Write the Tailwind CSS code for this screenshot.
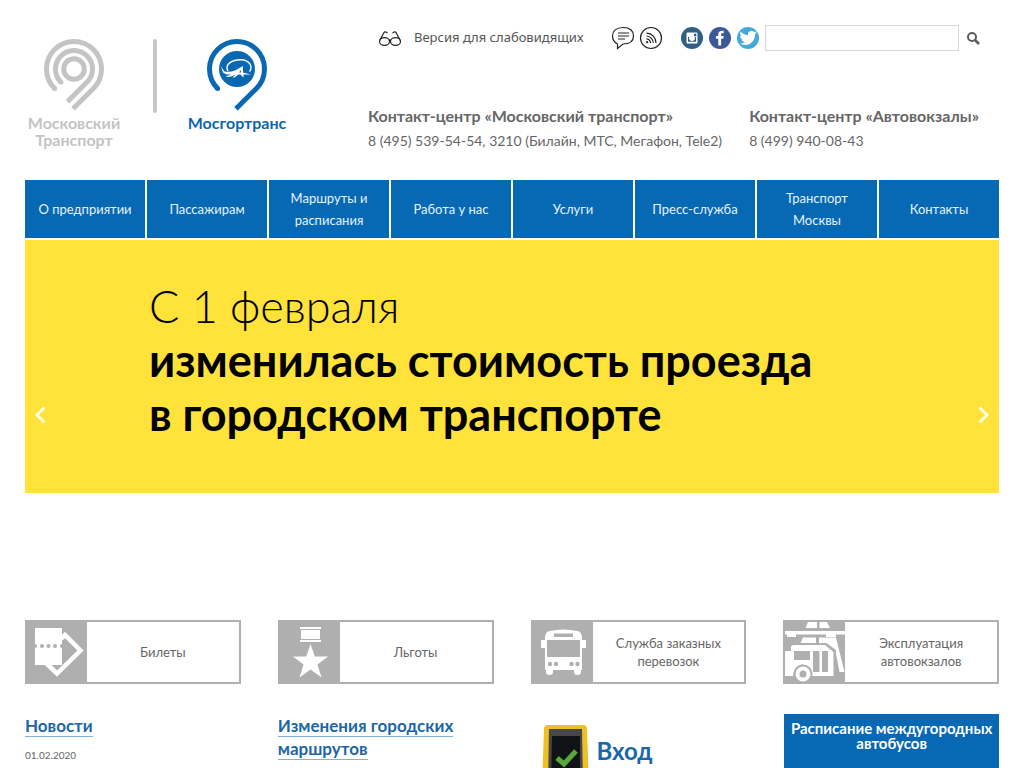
<!DOCTYPE html>
<html lang="ru">
<head>
<meta charset="utf-8">
<meta name="viewport" content="width=device-width, initial-scale=1">
<title>Мосгортранс</title>
<script src="https://cdn.jsdelivr.net/npm/@tailwindcss/browser@4"></script>
</head>
<body class="bg-white font-['Lato','Noto_Sans',sans-serif] text-[#666]">
<div class="px-[25px]">
  <header class="flex h-[180px]">
    <div class="flex w-[343px] shrink-0 pt-[38px]">
      <a href="#" class="flex w-[98px] flex-col items-center text-center text-base leading-[17px] font-bold text-[#c4c4c4]">
        <svg class="h-[76px] w-[62px]" viewBox="43 38 62 76" fill="none" stroke="#c4c4c4" stroke-width="5" aria-hidden="true">
          <circle cx="74" cy="69" r="10.3"/>
          <path d="M60.9 82.1A18.5 18.5 0 1 1 87.1 82.1L67.5 101.7"/>
          <path d="M54.6 88.4A27.5 27.5 0 1 1 93.4 88.4L73 108.8"/>
          <circle cx="60.9" cy="82" r="2.5" fill="#c4c4c4" stroke="none"/>
          <circle cx="54.6" cy="88.4" r="2.5" fill="#c4c4c4" stroke="none"/>
        </svg>
        <span>Московский Транспорт</span>
      </a>
      <div class="mt-px ml-[30px] h-[74px] w-1 rounded-full bg-[#c8c8c8]"></div>
      <a href="#" class="ml-[30px] flex w-[100px] flex-col items-center text-center text-base leading-[17px] font-bold text-[#0a67b2]">
        <svg class="h-[76px] w-[62px]" viewBox="43 38 62 76" fill="none" stroke="#0a67b2" stroke-width="5" aria-hidden="true">
          <path d="M54.6 88.4A27.5 27.5 0 1 1 93.4 88.4L73 108.8"/>
          <circle cx="54.6" cy="88.4" r="2.5" fill="#0a67b2" stroke="none"/>
          <circle cx="74" cy="69" r="18" fill="#0a67b2" stroke="none"/>
          <path d="M65 71C61 64 70 59.500 78 59.700C86 60 90.500 66 86.500 71.500" stroke="#fff" stroke-width="1.400"/>
          <path d="M58 66.500L61.500 71.500Q67 72.500 72 70.500L80 66V72.500L88 74.500L80.500 74.500V77.500L77.500 74.500H75.500L71.500 77.500H69.500L72.500 74.500Q67 78 62.500 76.500L68.500 74.500L63.500 74.500L60 72.500ZM76 72.500H78V70Z" fill="#fff" fill-rule="evenodd" stroke="none"/>
        </svg>
        <span>Мосгортранс</span>
      </a>
    </div>
    <div class="min-w-0 flex-1">
      <div class="flex items-center pt-[25px] pl-[10px]">
        <a href="#" class="flex items-center gap-3 font-['Noto_Sans',sans-serif] text-[13px] text-[#555]">
          <svg class="h-[18px] w-6" viewBox="0 0 24 18" fill="none" stroke="#222" stroke-width="1.200" aria-hidden="true">
            <ellipse cx="6.500" cy="12.500" rx="5" ry="3.800"/><ellipse cx="17.500" cy="12.500" rx="5" ry="3.800"/>
            <path d="M11 11.500Q12 10.500 13 11.500M1.700 11.500L6 3.500Q7 2 9.500 4M22.300 11.500L18 3.500Q17 2 14.500 4"/>
          </svg>
          <span class="w-[175px] whitespace-nowrap">Версия для слабовидящих</span>
        </a>
        <a href="#" aria-label="Обратная связь" class="ml-[22px]">
          <svg class="size-6" viewBox="0 0 24 24" fill="none" stroke="#222" stroke-width="1.200">
            <path d="M6.500 18C3.500 16.500 1.500 13.500 1.500 10C1.500 5 5 1.500 12 1.500S22.500 5 22.500 10S19 18 12 18L6.500 22.500Z"/>
            <path d="M7 7H18M7 10H18M7 13H14"/>
          </svg>
        </a>
        <a href="#" aria-label="RSS" class="ml-1">
          <svg class="size-6" viewBox="0 0 24 24" fill="none" stroke="#222" stroke-width="1.200">
            <circle cx="12" cy="12" r="10.500"/><circle cx="8.200" cy="16.200" r="1.100" fill="#222" stroke="none"/>
            <path d="M7.500 12.800A4 4 0 0 1 11.500 17M7.500 10A7 7 0 0 1 14.200 17M7.500 7.200A9.500 9.500 0 0 1 17 17"/>
          </svg>
        </a>
        <a href="#" aria-label="Instagram" class="ml-[18px]">
          <svg class="size-[22px]" viewBox="0 0 22 22">
            <circle cx="11" cy="11" r="11" fill="#305f85"/>
            <path fill="#fff" fill-rule="evenodd" d="M6.500 5.500h9a1 1 0 0 1 1 1v9a1 1 0 0 1-1 1h-9a1 1 0 0 1-1-1v-9a1 1 0 0 1 1-1ZM13 6.800v2.400h2.300V6.800ZM7 10v4.800h8V10h-1.200a3 3 0 1 1-5.600 0Z"/>
            <circle cx="11" cy="11" r="1.800" fill="#fff"/>
          </svg>
        </a>
        <a href="#" aria-label="Facebook" class="ml-1.5">
          <svg class="size-[22px]" viewBox="0 0 22 22">
            <circle cx="11" cy="11" r="11" fill="#3b5998"/>
            <path fill="#fff" d="M9.300 18.500V11.700H7V9h2.300V7.200C9.300 4.900 10.700 3.700 12.700 3.700h2V6.300h-1.300c-1 0-1.300.5-1.300 1.300V9h2.600l-.4 2.700h-2.200v6.800Z"/>
          </svg>
        </a>
        <a href="#" aria-label="Twitter" class="ml-1.5">
          <svg class="size-[22px]" viewBox="0 0 22 22">
            <circle cx="11" cy="11" r="11" fill="#45a8dd"/>
            <path fill="#fff" transform="translate(2.500 2.300) scale(.72)" d="M23.950 4.570a10 10 0 0 1-2.820.77 4.960 4.960 0 0 0 2.160-2.720c-.95.550-2 .950-3.130 1.180a4.920 4.920 0 0 0-8.380 4.480C7.690 8.100 4.070 6.130 1.640 3.160a4.920 4.920 0 0 0 1.520 6.570 4.900 4.900 0 0 1-2.230-.61v.06a4.920 4.920 0 0 0 3.950 4.830 5 5 0 0 1-2.210.08 4.940 4.940 0 0 0 4.600 3.420A9.870 9.870 0 0 1 0 19.540a14 14 0 0 0 7.550 2.210c9.050 0 14-7.500 14-13.980 0-.21 0-.42-.02-.63a9.940 9.940 0 0 0 2.460-2.550Z"/>
          </svg>
        </a>
        <form role="search" class="ml-1.5 flex min-w-0 flex-1 items-center pr-[18px]" onsubmit="return false">
          <input type="search" aria-label="Поиск" class="h-[26px] min-w-0 flex-1 border border-[#d5d8da] bg-white px-2 text-sm">
          <button type="submit" aria-label="Найти" class="ml-[7px]">
            <svg class="size-[15px]" viewBox="0 0 15 15" fill="none" stroke="#5c5c5c"><circle cx="6" cy="6" r="4" stroke-width="2"/><path d="M9 9L13 13" stroke-width="2.600"/></svg>
          </button>
        </form>
      </div>
      <div class="flex justify-between pt-[53px] pr-5 whitespace-nowrap">
        <section>
          <h2 class="text-base leading-6 font-bold">Контакт-центр «Московский транспорт»</h2>
          <p class="text-sm leading-[26px]">8 (495) 539-54-54, 3210 (Билайн, МТС, Мегафон, Tele2)</p>
        </section>
        <section>
          <h2 class="text-base leading-6 font-bold">Контакт-центр «Автовокзалы»</h2>
          <p class="text-sm leading-[26px]">8 (499) 940-08-43</p>
        </section>
      </div>
    </div>
  </header>

  <nav class="grid h-[58px] grid-cols-8 gap-0.5 text-center text-[13px] leading-[22px] text-[#e4f3ff]">
    <a href="#" class="flex items-center justify-center bg-[#0769b3] px-3">О предприятии</a>
    <a href="#" class="flex items-center justify-center bg-[#0769b3] px-3">Пассажирам</a>
    <a href="#" class="flex items-center justify-center bg-[#0769b3] px-3">Маршруты и расписания</a>
    <a href="#" class="flex items-center justify-center bg-[#0769b3] px-3">Работа у нас</a>
    <a href="#" class="flex items-center justify-center bg-[#0769b3] px-3">Услуги</a>
    <a href="#" class="flex items-center justify-center bg-[#0769b3] px-3">Пресс-служба</a>
    <a href="#" class="flex items-center justify-center bg-[#0769b3] px-6">Транспорт Москвы</a>
    <a href="#" class="flex items-center justify-center bg-[#0769b3] px-3">Контакты</a>
  </nav>

  <section class="relative mt-0.5 h-[253px] bg-[#ffe23a] pt-[39px] pl-[124px] text-[45px] leading-[54px] text-black">
    <p class="font-light">С 1 февраля</p>
    <p class="font-bold">изменилась стоимость проезда<br>в городском транспорте</p>
    <button type="button" aria-label="Назад" class="absolute top-[165px] left-2"><svg class="h-5 w-3.5" viewBox="0 0 14 20" fill="none" stroke="#fffde0" stroke-width="3"><path d="M11.500 2.500L4 10L11.500 17.500"/></svg></button>
    <button type="button" aria-label="Вперёд" class="absolute top-[165px] right-2"><svg class="h-5 w-3.5" viewBox="0 0 14 20" fill="none" stroke="#fffde0" stroke-width="3"><path d="M2.500 2.500L10 10L2.500 17.500"/></svg></button>
  </section>

  <div class="mt-[127px] grid grid-cols-4 gap-[37px] text-center text-[13px] leading-[18px]">
    <a href="#" class="flex h-16 border-2 border-[#afafaf]">
      <svg class="size-[60px] shrink-0 bg-[#afafaf]" viewBox="0 0 60 60" aria-hidden="true">
        <path d="M34 17L38 13L53.500 28.500L30 51.500L19 41" fill="none" stroke="#fff" stroke-width="4.500"/>
        <path d="M8 6H35V43H8Z" fill="#fff"/>
        <g fill="#afafaf"><path d="M8 22a2 2 0 0 1 0 4ZM35 22a2 2 0 0 0 0 4Z"/><circle cx="15" cy="24" r="2"/><circle cx="21.500" cy="24" r="2"/><circle cx="28" cy="24" r="2"/></g>
      </svg>
      <span class="flex flex-1 items-center justify-center">Билеты</span>
    </a>
    <a href="#" class="flex h-16 border-2 border-[#afafaf]">
      <svg class="size-[60px] shrink-0 bg-[#afafaf]" viewBox="0 0 60 60" fill="#fff" aria-hidden="true">
        <path d="M20 5H41V7H20ZM21 8H40V17H21ZM20 18H41V20H20Z"/>
        <path d="M30.500 22L34.800 34.500H48L37.500 42.500L41.500 55.500L30.500 47.500L19.500 55.500L23.500 42.500L13 34.500H26.200Z"/>
      </svg>
      <span class="flex flex-1 items-center justify-center">Льготы</span>
    </a>
    <a href="#" class="flex h-16 border-2 border-[#afafaf]">
      <svg class="size-[60px] shrink-0 bg-[#afafaf]" viewBox="0 0 60 60" fill="#fff" aria-hidden="true">
        <path fill-rule="evenodd" d="M12 17Q12 9 17 9Q30 6 44 9Q49 9 49 17V18H53V26H49V48H48V50Q48 53 44.500 53T41 50V48H20V50Q20 53 16.500 53T13 50V48H12V26H8V18H12ZM21 11.500V15H40V11.500ZM14 18V35H47V18Z"/>
        <g fill="#afafaf"><circle cx="17" cy="42" r="2.200"/><circle cx="23" cy="42" r="2.200"/><circle cx="38.500" cy="42" r="2.200"/><circle cx="44.500" cy="42" r="2.200"/></g>
      </svg>
      <span class="flex flex-1 items-center justify-center px-4">Служба заказных перевозок</span>
    </a>
    <a href="#" class="flex h-16 border-2 border-[#afafaf]">
      <svg class="size-[60px] shrink-0 bg-[#afafaf]" viewBox="0 0 60 60" fill="#fff" aria-hidden="true">
        <path d="M23 0H32V6H20.500ZM34.500 0H42L45 6H34.500ZM0 9H60V12.500H51V15H41V12.500H11V15H2V12.500H0ZM18 15.500H31V21H15.500Z"/>
        <path d="M34 15.500H51L59.500 50H54.500L51 32V28L41.500 21H34Z"/>
        <path d="M0 29H6V25Q6 23 9 23H40L48.500 30V54H0Z"/>
        <path d="M9 29H25V38H9ZM28 29H34.500V50H28ZM37 29H43V50H37Z" fill="#afafaf"/>
        <path d="M0 55L8 55Q8 44 18 42V60H0Z" fill="#afafaf"/>
        <path d="M0 41H12Q7 46 7 54H0Z"/>
        <circle cx="18" cy="52" r="9.500" fill="#afafaf"/>
        <circle cx="18" cy="52" r="5.500" fill="none" stroke="#fff" stroke-width="4"/>
      </svg>
      <span class="flex flex-1 items-center justify-center px-6">Эксплуатация автовокзалов</span>
    </a>
  </div>

  <main class="mt-[30px] grid h-[54px] grid-cols-4 gap-[37px] overflow-hidden">
    <section>
      <h2 class="text-[17px] leading-[23px] font-bold"><a href="#" class="border-b border-[#7fb2da] text-[#1a67a8]">Новости</a></h2>
      <time datetime="2020-02-01" class="mt-3 block text-[10px] leading-3">01.02.2020</time>
    </section>
    <section>
      <h2 class="text-[17px] leading-[23px] font-bold"><a href="#" class="border-b border-[#7fb2da] text-[#1a67a8]">Изменения городских маршрутов</a></h2>
    </section>
    <a href="#" class="flex gap-2 pt-[11px] pl-[11px] text-2xl leading-[52px] font-bold text-[#1a67a8]">
      <svg class="h-[60px] w-[47px] shrink-0" viewBox="0 0 47 60" aria-hidden="true">
        <path d="M6 0H41Q45 0 45 4L47 60H0L2 4Q2 0 6 0Z" fill="#eec022"/>
        <path d="M7 4H40L41 60H6Z" fill="#474747"/>
        <path d="M10 11H38V60H9Z" fill="#101318"/>
        <path d="M15 33L22 39L34 26" fill="none" stroke="#57a83a" stroke-width="5"/>
      </svg>
      <span>Вход</span>
    </a>
    <a href="#" class="ml-px h-20 bg-[#0769b3] px-1 pt-[7px] text-center text-[15px] leading-[15px] font-bold text-white">Расписание междугородных автобусов</a>
  </main>
</div>
</body>
</html>
